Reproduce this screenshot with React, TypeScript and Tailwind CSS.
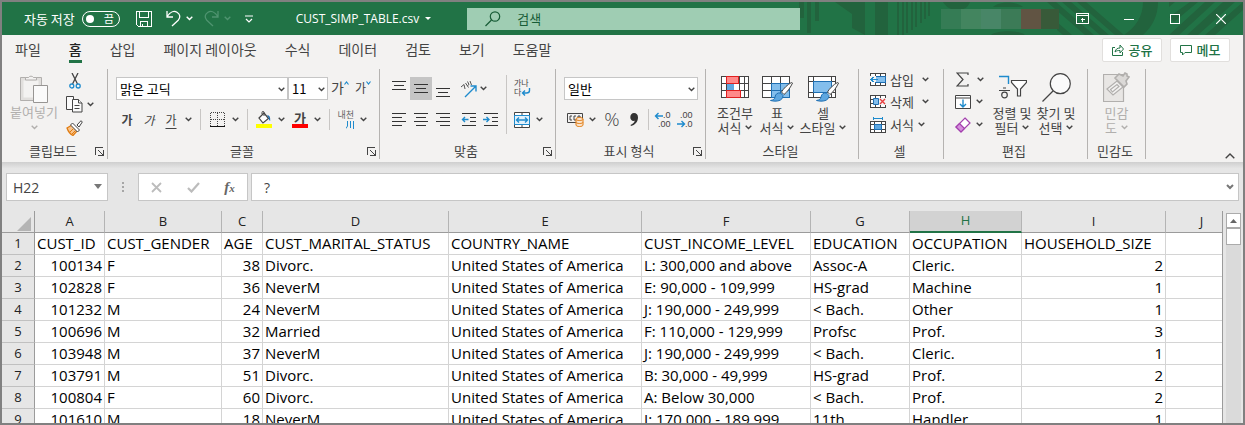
import type { ReactNode } from 'react';
import clsx from 'clsx';

interface Customer {
  id: number;
  gender: string;
  age: number;
  marital: string;
  country: string;
  income: string;
  education: string;
  occupation: string;
  household: number;
}

const USA = 'United States of America';

const customers: Customer[] = [
  { id: 100134, gender: 'F', age: 38, marital: 'Divorc.', country: USA, income: 'L: 300,000 and above', education: 'Assoc-A', occupation: 'Cleric.', household: 2 },
  { id: 102828, gender: 'F', age: 36, marital: 'NeverM', country: USA, income: 'E: 90,000 - 109,999', education: 'HS-grad', occupation: 'Machine', household: 1 },
  { id: 101232, gender: 'M', age: 24, marital: 'NeverM', country: USA, income: 'J: 190,000 - 249,999', education: '< Bach.', occupation: 'Other', household: 1 },
  { id: 100696, gender: 'M', age: 32, marital: 'Married', country: USA, income: 'F: 110,000 - 129,999', education: 'Profsc', occupation: 'Prof.', household: 3 },
  { id: 103948, gender: 'M', age: 37, marital: 'NeverM', country: USA, income: 'J: 190,000 - 249,999', education: '< Bach.', occupation: 'Cleric.', household: 1 },
  { id: 103791, gender: 'M', age: 51, marital: 'Divorc.', country: USA, income: 'B: 30,000 - 49,999', education: 'HS-grad', occupation: 'Prof.', household: 2 },
  { id: 100804, gender: 'F', age: 60, marital: 'Divorc.', country: USA, income: 'A: Below 30,000', education: '< Bach.', occupation: 'Prof.', household: 2 },
  { id: 101610, gender: 'M', age: 18, marital: 'NeverM', country: USA, income: 'I: 170,000 - 189,999', education: '11th', occupation: 'Handler', household: 1 },
];

const columns = [
  { letter: 'A', width: 'w-[70px]', name: 'CUST_ID' },
  { letter: 'B', width: 'w-[117px]', name: 'CUST_GENDER' },
  { letter: 'C', width: 'w-[41px]', name: 'AGE' },
  { letter: 'D', width: 'w-[186px]', name: 'CUST_MARITAL_STATUS' },
  { letter: 'E', width: 'w-[193px]', name: 'COUNTRY_NAME' },
  { letter: 'F', width: 'w-[169px]', name: 'CUST_INCOME_LEVEL' },
  { letter: 'G', width: 'w-[99px]', name: 'EDUCATION' },
  { letter: 'H', width: 'w-[112px]', name: 'OCCUPATION' },
  { letter: 'I', width: 'w-[144px]', name: 'HOUSEHOLD_SIZE' },
  { letter: 'J', width: '', name: '' },
];

const tabs = ['파일', '홈', '삽입', '페이지 레이아웃', '수식', '데이터', '검토', '보기', '도움말'];

function Chevron({ className }: { className?: string }) {
  return (
    <svg viewBox="0 0 7 5" className={clsx('h-[5px] w-[7px] shrink-0', className)} fill="none" stroke="currentColor" strokeWidth="1.4">
      <path d="M.7 .8 3.5 3.6 6.3 .8" />
    </svg>
  );
}

function DropButton({ label, className }: { label: string; className?: string }) {
  return (
    <button aria-label={label} className={clsx('flex h-[22px] w-3 items-center justify-center', className)}>
      <Chevron />
    </button>
  );
}

function IconButton({ label, active, children }: { label: string; active?: boolean; children: ReactNode }) {
  return (
    <button aria-label={label} className={clsx('flex h-[23px] w-[22px] shrink-0 items-center justify-center', active && 'bg-[#c5c5c5]')}>
      {children}
    </button>
  );
}

function Divider({ className }: { className?: string }) {
  return <span className={clsx('w-px bg-[#c8c6c4]', className)} />;
}

function Group({ title, width, launcher, children }: { title: string; width: string; launcher?: boolean; children: ReactNode }) {
  return (
    <section aria-label={title} className={clsx('flex h-[90px] shrink-0 flex-col border-r border-[#b5b3b1]', width)}>
      <div className="flex h-[76px] items-start">{children}</div>
      <div className="grid h-4 grid-cols-[1fr_auto_1fr] items-center pr-[3px] leading-4">
        <span />
        <span>{title}</span>
        {launcher && (
          <button aria-label={`${title} 설정`} className="justify-self-end">
            <svg viewBox="0 0 9 9" className="size-[9px]" fill="none" stroke="#444" shapeRendering="crispEdges">
              <path d="M.5 8V.5H8M8.500 3v5.500H3M3.500 3.500l5 5" />
            </svg>
          </button>
        )}
      </div>
    </section>
  );
}

function Combo({ label, value, width }: { label: string; value: string; width: string }) {
  return (
    <div className={clsx('relative', width)}>
      <select aria-label={label} className="block h-[23px] w-full appearance-none border border-[#c6c6c6] bg-white pl-[3px] text-[13px] text-black">
        <option>{value}</option>
      </select>
      <Chevron className="pointer-events-none absolute top-[10px] right-[3px]" />
    </div>
  );
}

function Lines({ rows }: { rows: [number, number, number][] }) {
  return (
    <svg viewBox="0 0 16 16" className="size-4" stroke="#333" shapeRendering="crispEdges">
      {rows.map(([x1, x2, y]) => (
        <path key={y} d={`M${x1} ${y + 0.5}H${x2}`} />
      ))}
    </svg>
  );
}

function Arrow({ d }: { d: string }) {
  return <path d={d} stroke="#1e8bcd" strokeWidth="1.4" fill="none" />;
}

function BigButton({ icon, lines, width, disabled }: { icon: ReactNode; lines: [string, string]; width: string; disabled?: boolean }) {
  return (
    <button disabled={disabled} className={clsx('flex shrink-0 flex-col items-center whitespace-nowrap leading-[15px]', width, disabled && 'text-[#b1afad]')}>
      <span className="flex h-9 items-center">{icon}</span>
      <span>{lines[0]}</span>
      <span className="flex items-center gap-1">
        {lines[1]}
        <Chevron />
      </span>
    </button>
  );
}

function Brush() {
  return (
    <g>
      <path d="M29.500 6.500c-4 2-8 6-10 9.500l2.500 2.500c3.500-2.500 7-8 8.500-11.500z" fill="#fff" stroke="#444" />
      <path d="M18.500 17c-3-.5-5 1-5.500 4-.3 2-1.500 3-4.500 3.500 6 1.500 12.500.5 12.500-5z" fill="#5ea7e0" stroke="#1f6fb2" />
    </g>
  );
}

function TitleBar() {
  return (
    <header className="relative flex h-[33px] shrink-0 items-center overflow-hidden bg-[#217346] text-[13px] text-white">
      <svg viewBox="0 0 458 33" className="absolute top-0 right-0 h-[33px] w-[458px]" fill="#22633d">
        <path d="M14 0h5v16h-5zM22 0h4v31h-4zM30 0h4v19h-4zM50 0h30v33l-13-7V12zM90 0h13v33H90z" />
        <path d="M112 0h2v33h-2zM117 0h2v33h-2zM121 0h2v31h-2zM126 0h2v28h-2zM130 0h2v25h-2zM135 0h2v21h-2zM139 0h2v17h-2zM143 0h2v14h-2z" />
        <path d="M158 0h27c-2 6-7 8-13 8s-11-3-14-8zM206 33c6-5 28-5 34 0zM208 5c6-6 24-6 30 0zM358 0h15c0 14-6 25-15 33h-19c12-8 19-19 19-33z" />
        <path d="M262 0h9l38 33h-9zM277 0h9l38 33h-9zM292 0h9l38 33h-9zM272 20l15 13h-9l-6-5z" />
        <path d="m384 5 6-5h-6zM405 0h8l-24 20-5-5zM420 0h10l-36 33h-10zM438 0h12l-37 33h-11zM458 0v8l-28 25h-10z" />
      </svg>
      <label className="flex items-center gap-[7px] pl-[22px]">
        자동 저장
        <input type="checkbox" role="switch" className="peer sr-only" />
        <span className="flex h-4 w-[38px] items-center justify-between rounded-full border border-white pr-[5px] pl-[3px] text-[11px] leading-none">
          <span className="size-2 rounded-full bg-white" />
          끔
        </span>
      </label>
      <button aria-label="저장" className="ml-4">
        <svg viewBox="0 0 16 16" className="size-4" fill="none" stroke="#fff" shapeRendering="crispEdges">
          <path d="M.5.500h15v15H2.500l-2-2zM3.500.500v6h9v-6M4.500 15.500v-5h7v5M6.500 15v-2" />
        </svg>
      </button>
      <button aria-label="실행 취소" className="ml-[14px] flex items-center gap-[5px]">
        <svg viewBox="0 0 15 17" className="h-[17px] w-[15px]" fill="none" stroke="#fff" strokeWidth="1.300">
          <path d="M1 1v6h6M1.200 6.500C4 2 8 .5 11 2.200c3.500 2 3.500 5.500 1.200 8L6 16" />
        </svg>
        <Chevron />
      </button>
      <button aria-label="다시 실행" disabled className="ml-[11px] flex items-center gap-[5px] text-[#4f9470]">
        <svg viewBox="0 0 15 17" className="h-[17px] w-[15px]" fill="none" stroke="currentColor" strokeWidth="1.300">
          <path d="M14 1v6H8M13.800 6.500C11 2 7 .5 4 2.200.5 4.200.5 7.700 2.800 10.200L9 16" />
        </svg>
        <Chevron />
      </button>
      <button aria-label="빠른 실행 도구 모음 사용자 지정" className="ml-[14px]">
        <svg viewBox="0 0 8 8" className="size-2" fill="none" stroke="#fff" strokeWidth="1.200">
          <path d="M0 1h8M1 4l3 3 3-3" />
        </svg>
      </button>
      <button className="ml-[43px] flex items-center gap-1.5 font-['Open_Sans','Noto_Sans_CJK_KR',sans-serif] text-xs">
        CUST_SIMP_TABLE.csv
        <svg viewBox="0 0 6 3" className="h-[3px] w-[6px]" fill="#fff"><path d="M0 0h6L3 3z" /></svg>
      </button>
      <div className="relative ml-[36px] flex h-[22px] w-[333px] items-center bg-[#9fcdb3] pl-[18px] text-[#185c37]">
        <svg viewBox="0 0 16 16" className="size-4 shrink-0" fill="none" stroke="currentColor" strokeWidth="1.200">
          <circle cx="10" cy="5.500" r="4.700" />
          <path d="m6.500 9-6 6" />
        </svg>
        <input aria-label="검색" placeholder="검색" className="ml-4 min-w-0 flex-1 bg-transparent text-[13px] outline-none placeholder:text-[#185c37]" />
      </div>
      <div className="relative ml-auto flex items-center pr-[17px]">
        <span className="mr-[17px] flex h-5">
          <span className="w-5 bg-[#357c55]" />
          <span className="w-5 bg-[#43855f]" />
          <span className="w-5 bg-[#488667]" />
          <span className="w-5 bg-[#3c7b57]" />
          <span className="w-5 bg-[#615443]" />
          <span className="w-[18px] bg-[#385a39]" />
        </span>
        <button aria-label="리본 표시 옵션">
          <svg viewBox="0 0 13 11" className="h-[11px] w-[13px]" fill="none" stroke="#fff" shapeRendering="crispEdges">
            <path d="M.5.500h12v10H.500zM0 2.500h13M6.500 9V4.500M4.500 6.500h1v-1M8.500 6.500h-1v-1" />
          </svg>
        </button>
        <button aria-label="최소화" className="ml-[35px]">
          <svg viewBox="0 0 10 10" className="size-[10px]" stroke="#fff" shapeRendering="crispEdges"><path d="M0 5.500h10" /></svg>
        </button>
        <button aria-label="최대화" className="ml-[36px]">
          <svg viewBox="0 0 10 10" className="size-[10px]" fill="none" stroke="#fff" shapeRendering="crispEdges"><path d="M.5.500h9v9h-9z" /></svg>
        </button>
        <button aria-label="닫기" className="ml-[36px]">
          <svg viewBox="0 0 10 10" className="size-[10px]" stroke="#fff" strokeWidth="1.200"><path d="m0 0 10 10M10 0 0 10" /></svg>
        </button>
      </div>
    </header>
  );
}

function TabBar() {
  return (
    <nav className="flex h-[31px] shrink-0 items-start pr-[13px] pl-[13px]">
      <div className="flex gap-7 text-[14px]">
        {tabs.map((tab) => (
          <button
            key={tab}
            className={clsx('border-b-[3px] pt-1 leading-[21px]', tab === '홈' ? 'border-[#217346] font-medium text-[#222]' : 'border-transparent text-[#444]')}
          >
            {tab}
          </button>
        ))}
      </div>
      <div className="ml-auto flex gap-2 pt-[3px] text-[13px] font-medium text-[#217346]">
        <button className="flex h-6 w-[60px] items-center justify-center gap-[5px] rounded-xs border border-[#e1dfdd] bg-white">
          <svg viewBox="0 0 12 12" className="size-3" fill="none" stroke="currentColor">
            <path d="M3 3.500H.5v8h10V8M3 8c.5-3 2.500-4 5-4V1l3.500 4L8 9V6.500C6 6.500 4.500 6.500 3 8z" />
          </svg>
          공유
        </button>
        <button className="flex h-6 w-[60px] items-center justify-center gap-[5px] rounded-xs border border-[#e1dfdd] bg-white">
          <svg viewBox="0 0 12 12" className="size-3" fill="none" stroke="currentColor">
            <path d="M.5 1.500h11v7H5L2.500 11V8.500h-2z" />
          </svg>
          메모
        </button>
      </div>
    </nav>
  );
}

function ClipboardGroup() {
  return (
    <Group title="클립보드" width="w-[106px]" launcher>
      <button disabled className="flex w-16 shrink-0 flex-col items-center pt-1 leading-[15px] whitespace-nowrap text-[#b1afad]">
        <svg viewBox="0 0 28 31" className="h-[31px] w-7" fill="none" stroke="#b1afad">
          <path d="M.5 4.500h21v23H.5z" fill="#e1dfdd" />
          <path d="M3.500 7.500h15v17h-15z" fill="#f3f2f1" stroke="none" />
          <path d="M5.500 7V4.500h3a3 3 0 0 1 5 0h3V7z" fill="#f3f2f1" />
          <path d="M13.500 12.500h14v17h-14z" fill="#fafafa" stroke="#979593" />
        </svg>
        <span>붙여넣기</span>
        <Chevron className="mt-1.5" />
      </button>
      <div className="flex flex-col">
        <button aria-label="잘라내기" className="flex h-[23px] items-center pl-[3px]">
          <svg viewBox="0 0 12 16" className="h-4 w-3" fill="none">
            <path d="M3 0 8.500 11M9 0 3.500 11" stroke="#444" strokeWidth="1.300" />
            <circle cx="2.800" cy="13" r="2" stroke="#1e8bcd" strokeWidth="1.300" />
            <circle cx="9.200" cy="13" r="2" stroke="#1e8bcd" strokeWidth="1.300" />
          </svg>
        </button>
        <button aria-label="복사" className="flex h-6 items-center gap-1">
          <svg viewBox="0 0 17 17" className="size-[17px]" fill="#fafafa" stroke="#444">
            <path d="M.5.500h7v13h-7z" />
            <path d="M6.500 3.500h6l3.500 3.500v9H6.500z" />
            <path d="M12.500 3.500V7H16M8.500 9.500h5M8.500 12.500h5" />
          </svg>
          <Chevron />
        </button>
        <button aria-label="서식 복사" className="flex h-[23px] items-center">
          <svg viewBox="0 0 17 16" className="h-4 w-[17px]">
            <path d="M1 8l5-3 5 6-4 4.500C4 14 2 11 1 8z" fill="#f9c48b" stroke="#e07b10" strokeWidth="1.300" />
            <path d="m4 12 3-3M6 14l3-3" stroke="#e07b10" />
            <path d="m6.500 3 7 7-2 2-7-7zM11 5l4-4.300 1.300 1.300L13 7z" fill="#fff" stroke="#444" />
          </svg>
        </button>
      </div>
    </Group>
  );
}

function FontGroup() {
  return (
    <Group title="글꼴" width="w-[272px]" launcher>
      <div className="flex flex-col gap-2 pt-2 pl-2">
        <div className="flex items-center">
          <Combo label="글꼴 이름" value="맑은 고딕" width="w-[172px]" />
          <Combo label="글꼴 크기" value="11" width="w-10" />
          <button aria-label="글꼴 크기 크게" className="ml-[3px] flex h-[23px] items-start text-[14px] leading-5">
            가
            <svg viewBox="0 0 5 4" className="mt-1 h-1 w-[5px]" fill="none" stroke="#1e8bcd" strokeWidth="1.200"><path d="m.5 3.500 2-2.500 2 2.500" /></svg>
          </button>
          <button aria-label="글꼴 크기 작게" className="ml-1.5 flex h-[23px] items-start text-[12px] leading-[22px]">
            가
            <svg viewBox="0 0 5 4" className="mt-1 h-1 w-[5px]" fill="none" stroke="#1e8bcd" strokeWidth="1.200"><path d="m.5.500 2 2.500 2-2.500" /></svg>
          </button>
        </div>
        <div className="flex items-center text-[12px]">
          <button aria-label="굵게" className="w-[22px] font-bold">가</button>
          <button aria-label="기울임꼴" className="w-[22px] italic">가</button>
          <button aria-label="밑줄" className="w-[22px] underline underline-offset-3">가</button>
          <DropButton label="밑줄 종류" />
          <Divider className="mx-[6px] h-[21px]" />
          <button aria-label="테두리" className="flex h-[23px] w-[22px] items-center justify-center">
            <svg viewBox="0 0 16 16" className="size-4" stroke="#444" fill="none" shapeRendering="crispEdges">
              <path d="M.5.500h14v14M.5.500v14M7.500 1v13M1 7.500h13" strokeDasharray="1 1" />
              <path d="M0 14.500h15" stroke="#111" strokeWidth="1.500" />
            </svg>
          </button>
          <DropButton label="테두리 종류" />
          <Divider className="mx-[6px] h-[21px]" />
          <button aria-label="채우기 색" className="flex h-[23px] w-5 items-center justify-center">
            <svg viewBox="0 0 16 17" className="h-[17px] w-4">
              <path d="m3 7 5-5 4.500 5.500L7 12z" fill="#fff" stroke="#444" strokeWidth="1.200" />
              <path d="M8 5V1.500c0-1.500-2-1.500-2 0V3" fill="none" stroke="#444" />
              <path d="M11 4c2.500 0 3.500 2 3.200 6-1.500-.5-1.200-3-2-4z" fill="#1e6fb2" />
              <path d="M0 13h16v4H0z" fill="#ff0" />
            </svg>
          </button>
          <DropButton label="채우기 색 종류" className="ml-px" />
          <button aria-label="글꼴 색" className="ml-[3px] flex h-[23px] w-5 flex-col items-center justify-center text-[13px] leading-[13px] font-bold">
            가
            <span className="h-1 w-4 bg-[#f00]" />
          </button>
          <DropButton label="글꼴 색 종류" className="ml-px" />
          <Divider className="mx-[6px] h-[21px]" />
          <button aria-label="윗주 필드" className="flex h-[23px] w-[18px] flex-col items-end text-[9px] leading-[13px] text-[#666]">
            내천
            <svg viewBox="0 0 8 8" className="h-2 w-2" fill="none" stroke="#1e8bcd"><path d="M1.500 0v5L0 7.500M4.500 0v7M7.500 0v8" /></svg>
          </button>
          <DropButton label="윗주 종류" className="ml-[3px]" />
        </div>
      </div>
    </Group>
  );
}

function AlignGroup() {
  return (
    <Group title="맞춤" width="w-[176px]" launcher>
      <div className="flex flex-col gap-2 pt-2 pl-2">
        <div className="flex">
          <IconButton label="위쪽 맞춤"><Lines rows={[[1, 15, 0], [3, 13, 4], [1, 15, 8]]} /></IconButton>
          <IconButton label="가운데 맞춤" active><Lines rows={[[1, 15, 3], [3, 13, 7], [1, 15, 11]]} /></IconButton>
          <IconButton label="아래쪽 맞춤"><Lines rows={[[1, 15, 7], [3, 13, 11], [1, 15, 15]]} /></IconButton>
          <button aria-label="방향" className="ml-1 flex items-center">
            <span className="flex w-[22px] justify-center">
              <svg viewBox="0 0 18 18" className="size-[18px]" fill="none">
                <g stroke="#555"><path d="m1 7 3-2.500M4 4.500 5 9M5.500 3l3 4.500M7.500 5.500l1.500-1M7.500 1.500 9 4.500M10 1l1.500 4" /></g>
                <Arrow d="M5 17 16 6M10.500 6H16v5.500" />
              </svg>
            </span>
            <Chevron />
          </button>
        </div>
        <div className="flex">
          <IconButton label="왼쪽 맞춤"><Lines rows={[[1, 15, 1], [1, 11, 5], [1, 15, 9], [1, 11, 13]]} /></IconButton>
          <IconButton label="가로 가운데 맞춤"><Lines rows={[[1, 15, 1], [3, 13, 5], [1, 15, 9], [3, 13, 13]]} /></IconButton>
          <IconButton label="오른쪽 맞춤"><Lines rows={[[1, 15, 1], [5, 15, 5], [1, 15, 9], [5, 15, 13]]} /></IconButton>
          <span className="ml-1 flex">
            <IconButton label="내어쓰기">
              <svg viewBox="0 0 16 16" className="size-4" fill="none" stroke="#333">
                <path d="M1 1.500h14M9 5.500h6M9 9.500h6M1 13.500h14" />
                <Arrow d="M7.500 7.500H1.500M4 5 1.500 7.500 4 10" />
              </svg>
            </IconButton>
            <IconButton label="들여쓰기">
              <svg viewBox="0 0 16 16" className="size-4" fill="none" stroke="#333">
                <path d="M1 1.500h14M9 5.500h6M9 9.500h6M1 13.500h14" />
                <Arrow d="M0 7.500h6M3.500 5 6 7.500 3.500 10" />
              </svg>
            </IconButton>
          </span>
        </div>
      </div>
      <Divider className="mx-1 mt-[6px] h-[59px]" />
      <div className="flex flex-col gap-2 pt-2">
        <IconButton label="자동 줄 바꿈">
          <svg viewBox="0 0 17 17" className="size-[17px] overflow-visible" fill="none">
            <text x="0" y="6" fontSize="8" fill="#444">가나</text>
            <text x="0" y="15" fontSize="8" fill="#444">다</text>
            <Arrow d="M15.500 8v2.500c0 2-1.500 2.500-3 2.500H8.500M11 10.500 8.500 13l2.500 2.500" />
          </svg>
        </IconButton>
        <div className="flex">
          <IconButton label="병합하고 가운데 맞춤">
            <svg viewBox="0 0 16 16" className="size-4" fill="#fff" stroke="#444">
              <path d="M.5.500h15v15H.5zM8 0v4M8 12v4" />
              <path d="M.5 3.500h15v9H.5z" fill="#e3f1fb" stroke="#1e8bcd" />
              <Arrow d="M2.500 8h11M5 5.500 2.500 8 5 10.500M11 5.500 13.500 8 11 10.500" />
            </svg>
          </IconButton>
          <DropButton label="병합 종류" />
        </div>
      </div>
    </Group>
  );
}

function NumberGroup() {
  return (
    <Group title="표시 형식" width="w-[150px]" launcher>
      <div className="flex flex-col gap-2 pt-2 pl-2">
        <Combo label="표시 형식 종류" value="일반" width="w-[134px]" />
        <div className="flex items-center">
          <IconButton label="회계 표시 형식">
            <svg viewBox="0 0 17 15" className="h-[15px] w-[17px]" fill="none" stroke="#444">
              <path d="M.5 1.500h15v9H.5z" />
              <path d="M5 4H3v4h2M9 4H7v4h2M11 8V4h2v2" />
              <path d="M9 7v6c0 2 7 2 7 0V7z" fill="#fbe3cb" stroke="#e07b10" />
              <path d="M9 7c0 2 7 2 7 0s-7-2-7 0zM9 10c0 2 7 2 7 0" fill="#fbe3cb" stroke="#e07b10" />
            </svg>
          </IconButton>
          <DropButton label="회계 표시 형식 종류" />
          <button aria-label="백분율 스타일" className="ml-[3px] w-[22px] text-center font-['Open_Sans',sans-serif] text-[19px] leading-[23px] font-light">%</button>
          <IconButton label="쉼표 스타일">
            <svg viewBox="0 0 8 13" className="h-[13px] w-2" fill="#333">
              <path d="M4 0c2.500 0 4 1.700 4 4.500C8 9 5 12 1 13l-.5-1C3 11 4.500 9.500 4.700 7.800 2 8.500.3 6.500.3 4.200.3 1.800 1.800 0 4 0z" />
            </svg>
          </IconButton>
          <Divider className="mx-[3px] h-[21px]" />
          <IconButton label="자릿수 늘림">
            <svg viewBox="0 0 16 16" className="size-4 overflow-visible font-['Liberation_Sans',sans-serif]">
              <text x="8" y="6" fontSize="9" fill="#444">.0</text>
              <text x="3" y="15" fontSize="9" fill="#444">.00</text>
              <Arrow d="M8 4H.5M3.500 1 .5 4l3 3" />
            </svg>
          </IconButton>
          <IconButton label="자릿수 줄임">
            <svg viewBox="0 0 16 16" className="size-4 overflow-visible font-['Liberation_Sans',sans-serif]">
              <text x="3" y="6" fontSize="9" fill="#444">.00</text>
              <text x="8" y="15" fontSize="9" fill="#444">.0</text>
              <Arrow d="M0 12h7.500M4.500 9l3 3-3 3" />
            </svg>
          </IconButton>
        </div>
      </div>
    </Group>
  );
}

function StyleGroup() {
  return (
    <Group title="스타일" width="w-[153px]">
      <div className="flex pl-2">
        <BigButton
          width="w-[42px]"
          lines={['조건부', '서식']}
          icon={
            <svg viewBox="0 0 28 22" className="h-[22px] w-7" fill="#fff" stroke="#444" shapeRendering="crispEdges">
              <path d="M.5.500h27v21H.5zM5.500 0v22M12.500 0v22M18.500 0v22M23.500 0v22M0 7.500h28M0 14.500h28" />
              <path d="M5.500.500h12v7h-12zM5.500 14.500h14v7h-14z" fill="#ff8a8a" stroke="#e02020" />
              <path d="M6 8h7v6H6z" fill="#5ea7e0" stroke="none" />
            </svg>
          }
        />
        <BigButton
          width="w-[42px]"
          lines={['표', '서식']}
          icon={
            <svg viewBox="0 0 31 26" className="mt-1 h-[26px] w-[31px]" fill="#fff" stroke="#444">
              <path d="M.5.500h27v21H.5zM9.500 0v22M18.500 0v22M0 7.500h28M0 14.500h28" shapeRendering="crispEdges" />
              <path d="M9.500 7.500h18v14h-18zM9.500 14.500h18M18.500 7v15" fill="#83beec" stroke="#1f6fb2" shapeRendering="crispEdges" />
              <Brush />
            </svg>
          }
        />
        <BigButton
          width="w-[50px]"
          lines={['셀', '스타일']}
          icon={
            <svg viewBox="0 0 31 26" className="mt-1 h-[26px] w-[31px]" fill="#fff" stroke="#444">
              <path d="M.5.500h27v21H.5zM5.500 0v22M23.500 0v22M0 5.500h28M0 16.500h28" shapeRendering="crispEdges" />
              <path d="M5.500 5.500h18v11h-18z" fill="#83beec" stroke="#1f6fb2" shapeRendering="crispEdges" />
              <Brush />
            </svg>
          }
        />
      </div>
    </Group>
  );
}

function CellGroup() {
  return (
    <Group title="셀" width="w-[85px]">
      <div className="flex flex-col pl-[11px]">
        <button className="flex h-[21px] items-center">
          <svg viewBox="0 0 16 15" className="mr-1 h-[15px] w-4" fill="#fff" stroke="#444" shapeRendering="crispEdges">
            <path d="M.5 1.500h15v12H.5zM5.500 1v13M10.500 1v13M0 5.500h16M0 9.500h16" />
            <path d="M5.500 4.500h10v6h-10z" fill="#83beec" stroke="#1f6fb2" />
            <path d="M0 4h6v6H0z" fill="#f3f2f1" stroke="none" />
            <Arrow d="M8 7.500H1M3.500 5 1 7.500 3.500 10" />
          </svg>
          삽입
          <Chevron className="ml-2" />
        </button>
        <button className="flex h-[23px] items-center">
          <svg viewBox="0 0 16 15" className="mr-1 h-[15px] w-4" fill="#fff" stroke="#444">
            <path d="M.5 1.500h15v12H.5zM5.500 1v13M10.500 1v13M0 5.500h16M0 9.500h16" shapeRendering="crispEdges" />
            <path d="M3.500 4.500h5v6h-5z" fill="#83beec" stroke="#1f6fb2" />
            <path d="M9 4h7v7H9z" fill="#f3f2f1" stroke="none" />
            <path d="m10 5 5 5M15 5l-5 5" stroke="#e83f3f" strokeWidth="1.400" />
          </svg>
          삭제
          <Chevron className="ml-2" />
        </button>
        <button className="flex h-[23px] items-center">
          <svg viewBox="0 0 16 16" className="mr-1 size-4" fill="#fff" stroke="#444" shapeRendering="crispEdges">
            <path d="M.5 4.500h15v11H.5zM4.500 4v12M11.500 4v12M0 7.500h16M0 12.500h16" />
            <path d="M4.500 7.500h7v5h-7z" fill="#5ea7e0" stroke="#1f6fb2" />
            <path d="M3.500 0v3M12.500 0v3M3 1.500h10" stroke="#1e8bcd" />
          </svg>
          서식
          <Chevron className="ml-1" />
        </button>
      </div>
    </Group>
  );
}

function EditGroup() {
  return (
    <Group title="편집" width="w-[144px]">
      <div className="flex w-[38px] flex-col">
        <button aria-label="합계" className="flex h-[21px] items-center gap-2 pl-3">
          <svg viewBox="0 0 13 15" className="h-[15px] w-[13px] shrink-0" fill="none" stroke="#444" strokeWidth="1.200">
            <path d="M12 3V1H1l6 6.500L1 14h11v-2" />
          </svg>
          <Chevron />
        </button>
        <button aria-label="채우기" className="flex h-[23px] items-center gap-[5px] pl-[11px]">
          <svg viewBox="0 0 16 14" className="h-[14px] w-4 shrink-0" fill="#fff" stroke="#444">
            <path d="M.5.500h15v13H.5zM0 3h16" />
            <Arrow d="M8 4.500V12M5 9l3 3 3-3" />
          </svg>
          <Chevron />
        </button>
        <button aria-label="지우기" className="flex h-[23px] items-center gap-[5px] pl-[11px]">
          <svg viewBox="0 0 16 16" className="size-4 shrink-0" fill="#fff" stroke="#a33fae" strokeWidth="1.200">
            <path d="M10 1 15 6 6 15 1 10z" />
            <path d="m4.500 6.500 5 5L6 15 1 10z" fill="#d58fdc" />
          </svg>
          <Chevron />
        </button>
      </div>
      <div className="ml-2 flex">
        <BigButton
          width="w-11"
          lines={['정렬 및', '필터']}
          icon={
            <svg viewBox="0 0 29 24" className="h-6 w-[29px]" fill="none" stroke="#444" strokeWidth="1.200">
              <path d="M1 1.500h9.500V9" stroke="#1e8bcd" strokeWidth="1.400" />
              <path d="M5 13h3M1 15.500h11" />
              <circle cx="6.500" cy="20" r="2.800" />
              <path d="M13.500 5.500h15v2l-6 6.500v7h-3v-7l-6-6.500z" fill="#fff" />
            </svg>
          }
        />
        <BigButton
          width="w-11"
          lines={['찾기 및', '선택']}
          icon={
            <svg viewBox="0 0 29 29" className="h-[29px] w-[29px]" fill="#fafafa" stroke="#444" strokeWidth="1.200">
              <circle cx="18.300" cy="10.700" r="10" />
              <path d="M11 18 .5 28.500" />
            </svg>
          }
        />
      </div>
    </Group>
  );
}

function SensitivityGroup() {
  return (
    <Group title="민감도" width="w-[58px]">
      <BigButton
        disabled
        width="w-[57px]"
        lines={['민감', '도']}
        icon={
          <svg viewBox="0 0 27 30" className="h-[30px] w-[27px]" fill="#f3f2f1" stroke="#b1afad" strokeWidth="1.200">
            <path d="M.5 2.500h20v27H.5z" fill="#e8e6e4" />
            <path d="m4 17 10-8 6 6-10 8z" />
            <path d="m7.500 17.500 6.500-5 2 2-6.500 5.500z" />
            <path d="m12 6 4-4 4 2 2-3 2 1v2l2 1-3 4 1 3-3 3z" fill="#dbd9d7" strokeWidth="1.600" />
          </svg>
        }
      />
    </Group>
  );
}

function FormulaBar() {
  return (
    <div className="flex h-7 items-stretch px-1 text-[#444]">
      <div className="relative w-[102px] shrink-0">
        <input aria-label="이름 상자" defaultValue="H22" className="size-full border border-[#c6c6c6] bg-white pl-1.5 font-['Open_Sans',sans-serif] text-[14px]" />
        <svg viewBox="0 0 8 5" className="absolute top-[11px] right-[6px] h-[5px] w-2" fill="#777"><path d="M0 0h8L4 5z" /></svg>
      </div>
      <svg viewBox="0 0 2 10" className="mx-[14px] h-[10px] w-0.5 shrink-0 self-center" fill="#a6a6a6"><path d="M0 0h2v2H0zM0 4h2v2H0zM0 8h2v2H0z" /></svg>
      <div className="flex w-[110px] shrink-0 items-center justify-around border border-[#c6c6c6] bg-white">
        <button aria-label="취소">
          <svg viewBox="0 0 11 11" className="size-[11px]" stroke="#bcbcbc" strokeWidth="1.800"><path d="m1 1 9 9M10 1l-9 9" /></svg>
        </button>
        <button aria-label="입력">
          <svg viewBox="0 0 13 11" className="h-[11px] w-[13px]" fill="none" stroke="#bcbcbc" strokeWidth="2.200"><path d="m1 6 3.500 3.500L12 1" /></svg>
        </button>
        <button aria-label="함수 삽입" className="font-['Liberation_Serif',serif] text-[15px] leading-none font-bold text-[#666] italic">
          f<span className="text-[11px]">x</span>
        </button>
      </div>
      <div className="relative ml-[3px] min-w-0 flex-1">
        <input aria-label="수식 입력줄" defaultValue="?" className="size-full border border-[#c6c6c6] bg-white pl-3 font-['Open_Sans',sans-serif] text-[14px]" />
        <svg viewBox="0 0 8 6" className="absolute top-[11px] right-[5px] h-1.5 w-2" fill="none" stroke="#777" strokeWidth="2"><path d="m1 1 3 3 3-3" /></svg>
      </div>
    </div>
  );
}

function Cell({ children, right }: { children: ReactNode; right?: boolean }) {
  return <td className={clsx('border-r border-b border-[#d4d4d4] px-0.5', right && 'text-right')}>{children}</td>;
}

function RowHeader({ n }: { n: number }) {
  return (
    <th scope="row" className="border-r border-b border-r-[#9b9b9b] border-b-[#c0c0c0] bg-[#e6e6e6] text-[13px] font-normal text-[#222]">{n}</th>
  );
}

function Sheet() {
  return (
    <div className="flex min-h-0 flex-1">
      <div className="min-w-0 flex-1 overflow-hidden border-r border-[#9b9b9b]">
        <table className="w-full min-w-[1236px] table-fixed border-separate border-spacing-0 bg-white font-['Open_Sans',sans-serif] text-[15px] leading-[21px] whitespace-nowrap text-black">
          <thead>
            <tr className="h-[22px] bg-[#e6e6e6] text-[13px] text-[#222]">
              <th aria-label="모두 선택" className="w-[33px] border-r border-b border-[#9b9b9b]">
                <svg viewBox="0 0 14 14" className="mt-1 mr-[3px] ml-auto size-[14px]" fill="#b4b4b4"><path d="M14 0v14H0z" /></svg>
              </th>
              {columns.map((col) => (
                <th
                  key={col.letter}
                  scope="col"
                  className={clsx('border-r border-r-[#b4b4b4] p-0 font-normal', col.width, col.letter === 'H' ? 'border-b-2 border-b-[#217346] bg-[#d2d2d2] text-[#217346]' : 'border-b border-b-[#9b9b9b]')}
                >
                  <span className="block h-5 leading-[18px]">{col.letter}</span>
                </th>
              ))}
            </tr>
          </thead>
          <tbody>
            <tr className="h-[22px]">
              <RowHeader n={1} />
              {columns.map((col) => <Cell key={col.letter}>{col.name}</Cell>)}
            </tr>
            {customers.map((c, i) => (
              <tr key={c.id} className="h-[22px]">
                <RowHeader n={i + 2} />
                <Cell right>{c.id}</Cell>
                <Cell>{c.gender}</Cell>
                <Cell right>{c.age}</Cell>
                <Cell>{c.marital}</Cell>
                <Cell>{c.country}</Cell>
                <Cell>{c.income}</Cell>
                <Cell>{c.education}</Cell>
                <Cell>{c.occupation}</Cell>
                <Cell right>{c.household}</Cell>
                <Cell>{null}</Cell>
              </tr>
            ))}
          </tbody>
        </table>
      </div>
      <div className="mt-0.5 mr-0.5 ml-[3px] flex w-[15px] shrink-0 flex-col bg-[#dadada]">
        <button aria-label="위로 스크롤" className="flex h-[15px] items-center justify-center border border-[#ababab] bg-white">
          <svg viewBox="0 0 7 4" className="h-1 w-[7px]" fill="#666"><path d="M3.500 0 7 4H0z" /></svg>
        </button>
        <span className="h-[17px] border border-[#ababab] bg-white" />
      </div>
    </div>
  );
}

export default function App() {
  return (
    <div className="flex h-screen flex-col overflow-hidden border-2 border-[#808080] bg-[#e6e6e6] font-['Noto_Sans_CJK_KR',sans-serif] text-[13px] text-[#444]">
      <TitleBar />
      <div className="shrink-0 bg-[#f3f2f1]">
        <TabBar />
        <div className="flex pt-[3px] pb-[3px]">
          <ClipboardGroup />
          <FontGroup />
          <AlignGroup />
          <NumberGroup />
          <StyleGroup />
          <CellGroup />
          <EditGroup />
          <SensitivityGroup />
          <button aria-label="리본 축소" className="mr-2 ml-auto self-end">
            <svg viewBox="0 0 10 6" className="h-1.5 w-[10px]" fill="none" stroke="#444" strokeWidth="1.400"><path d="m.7 5.300 4.300-4.300 4.300 4.300" /></svg>
          </button>
        </div>
      </div>
      <div className="h-[11px] shrink-0 bg-linear-to-b from-[#cfcfcf] to-[#e6e6e6] to-60%" />
      <FormulaBar />
      <div className="h-[10px] shrink-0" />
      <Sheet />
    </div>
  );
}
